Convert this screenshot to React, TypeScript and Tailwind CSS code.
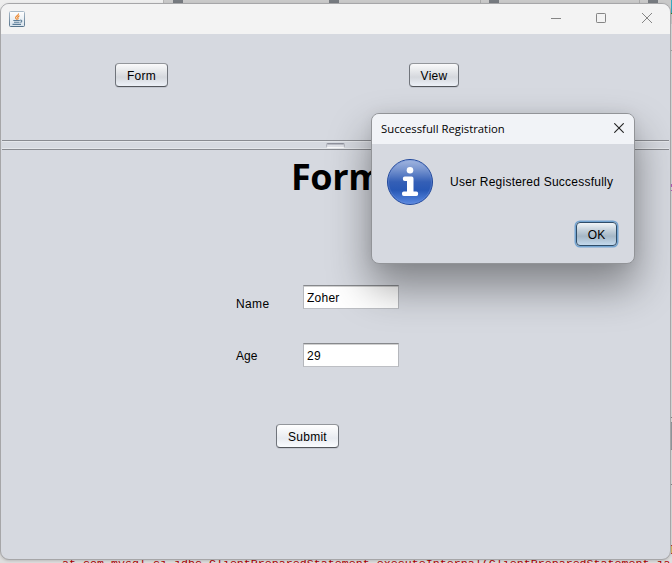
import type { ReactNode } from "react";

const swing = "font-['Liberation_Sans',Arial,sans-serif] text-[12px] leading-[14px] text-black";

function SwingButton({ className, children }: { className: string; children: ReactNode }) {
  return (
    <button
      className={`${swing} flex h-6 items-center justify-center rounded-[4px] border border-x-[#70747b] border-t-[#93969b] border-b-[#53565b] pt-px tracking-[0.25px] shadow-[0_1px_0_#c3c7d0] ${className}`}
    >
      {children}
    </button>
  );
}

function JavaIcon() {
  return (
    <svg width="16" height="16" viewBox="0 0 16 16" fill="none">
      <defs>
        <linearGradient id="javaBg" x2="0" y2="1">
          <stop stopColor="#fff" />
          <stop offset="1" stopColor="#d8e3ec" />
        </linearGradient>
        <linearGradient id="javaEdge" x2="0" y2="1">
          <stop stopColor="#a9bac8" />
          <stop offset="1" stopColor="#56738b" />
        </linearGradient>
      </defs>
      <rect x=".5" y=".5" width="15" height="15" rx="1" fill="url(#javaBg)" stroke="url(#javaEdge)" />
      <path d="M9.5 2.5C10 4.3 6.3 5 6.6 6.8c.1.7.9 1.1 1.1 1.8M10.5 4.8C8.7 5.5 8.4 6.3 9 7.1c.3.5 0 1-.5 1.4" stroke="#ed7d1b" strokeWidth="1.1" />
      <path d="M4.3 9.5h6.5M5 11.3h5.5M3.5 13.4h8.5M11.2 9.2c2.3-.3 2 1.8.2 2.2" stroke="#5b7d98" strokeWidth="1.1" />
    </svg>
  );
}

function InfoIcon() {
  return (
    <svg width="48" height="48" viewBox="0 0 48 48">
      <defs>
        <linearGradient id="infoBg" x2="0" y2="1">
          <stop stopColor="#a3b7e0" />
          <stop offset=".2" stopColor="#7c98d1" />
          <stop offset=".5" stopColor="#345fb6" />
          <stop offset=".68" stopColor="#2858b5" />
          <stop offset="1" stopColor="#5b8ae3" />
        </linearGradient>
      </defs>
      <circle cx="24" cy="24" r="22.5" fill="url(#infoBg)" stroke="#21489b" />
      <circle cx="24" cy="24" r="21.5" fill="none" stroke="#7597dd" strokeOpacity=".4" />
      <circle cx="24" cy="12.2" r="3.3" fill="#fff" />
      <path d="M18.8 18.6h6.9q1.8 0 1.8 1.8V33.6h2.8q1.9 0 1.9 2.2t-1.9 2.2H17.9q-2 0-2-2.2t2-2.2h3.1V23h-2.2q-2 0-2-2.2t2-2.2z" fill="#fff" />
    </svg>
  );
}

function Field({ value }: { value: string }) {
  return (
    <input
      readOnly
      value={value}
      className={`${swing} h-6 w-24 border border-x-[#b5b7bc] border-t-[#86888c] border-b-[#bdbfc4] bg-white pt-[2px] pl-[3px] tracking-[0.25px] shadow-[inset_0_1px_0_#d0d0d0] outline-none`}
    />
  );
}

function DialogWindow() {
  return (
    <section className="absolute top-[113px] left-[371px] flex h-[151px] w-[264px] flex-col overflow-hidden rounded-[8px] border border-[#929498] bg-[#d6d9e0] shadow-[0_22px_40px_2px_rgba(0,0,0,0.38),0_0_14px_rgba(0,0,0,0.06)]">
      <header className="flex h-[30px] shrink-0 items-center justify-between bg-[#f1f3f7] pr-[10px] pl-[9px]">
        <span className="font-['Open_Sans',sans-serif] text-[11.5px] leading-[16px] whitespace-nowrap text-black">
          <span className="inline-block origin-left scale-x-[0.983]">Successfull Registration</span>
        </span>
        <svg className="mb-[2px]" width="10" height="10" viewBox="0 0 10 10" stroke="#222" strokeWidth="1.1">
          <path d="M.3.3l9.4 9.4M9.7.3L.3 9.7" />
        </svg>
      </header>
      <div className="mt-[14px] flex items-center pl-[14px]">
        <InfoIcon />
        <span className={`${swing} ml-4 tracking-[0.23px] whitespace-nowrap`}>User Registered Successfully</span>
      </div>
      <div className="mt-4 flex justify-end pr-[17px]">
        <button
          className={`${swing} flex h-6 w-[41px] items-center justify-center rounded-[4px] border border-[#2f4d69] bg-[linear-gradient(#f1f5f8,#c1ced9_35%,#a5b7c6_60%,#c3d9ed)] pt-px shadow-[0_0_0_1.5px_#73a4d1]`}
        >
          OK
        </button>
      </div>
    </section>
  );
}

function MainWindow() {
  return (
    <main className="absolute top-[3px] left-0 flex h-[557px] w-[671px] flex-col overflow-hidden rounded-[9px] border border-[#a6a6a8] bg-[#d6d9e0] shadow-[0_1px_3px_rgba(0,0,0,0.16)]">
      <header className="flex h-[30px] shrink-0 items-center justify-between bg-[#f3f3f3] pr-[18px] pl-2">
        <JavaIcon />
        <div className="mb-[2px] flex items-center text-[#858585]">
          <svg className="mr-[35px]" width="10" height="10" viewBox="0 0 10 10" stroke="currentColor"><path d="M0 5.5h10" /></svg>
          <svg className="mr-9" width="10" height="10" viewBox="0 0 10 10" fill="none" stroke="currentColor"><rect x=".5" y=".5" width="9" height="9" rx=".7" /></svg>
          <svg width="10" height="10" viewBox="0 0 10 10" stroke="currentColor"><path d="M0 0l10 10M10 0L0 10" /></svg>
        </div>
      </header>
      <div className="flex h-[106px] shrink-0 items-start gap-[241px] pt-[29px] pl-[114px]">
        <SwingButton className="w-[53px] bg-[linear-gradient(#fafafb,#e4e6e9_35%,#d5d8dd_60%,#edf1f8)]">Form</SwingButton>
        <SwingButton className="w-[50px] bg-[linear-gradient(#fafafb,#e4e6e9_35%,#d5d8dd_60%,#edf1f8)]">View</SwingButton>
      </div>
      <div className="mx-px flex h-[10px] shrink-0 justify-center border-y border-[#898b91] shadow-[inset_0_1px_0_#e5e7eb,inset_0_-1px_0_#e5e7eb]">
        <div className="mt-[2px] h-[5px] w-[19px] rounded-[2px] border border-x-[#b4b6be] border-t-[#8f919c] border-b-[#f8f8fa] bg-[#dfe1e7] shadow-[inset_0_1px_0_#b9bbc4]" />
      </div>
      <div className="flex flex-col">
        <h1 className="mt-[3px] ml-[290px] h-12 font-['Open_Sans',sans-serif] text-[36px] leading-[48px] font-bold tracking-[-0.4px] text-black">Form</h1>
        <div className="mt-[84px] flex h-6 pl-[235px]">
          <label className={`${swing} mt-3 w-[67px] tracking-[0.35px]`}>Name</label>
          <Field value="Zoher" />
        </div>
        <div className="mt-[34px] flex h-6 pl-[235px]">
          <label className={`${swing} mt-[6px] w-[67px]`}>Age</label>
          <Field value="29" />
        </div>
        <SwingButton className="mt-[57px] ml-[275px] w-[63px] bg-[linear-gradient(#ffffff,#f0f2f5_40%,#e8ebf0_60%,#fafcff)]">Submit</SwingButton>
      </div>
    </main>
  );
}

export default function App() {
  return (
    <div className="relative flex h-[563px] w-[672px] flex-col overflow-hidden bg-[#dedede]">
      <div className="flex h-[24px] shrink-0 bg-[#c9c9c9]">
        <div className="h-full w-[164px] border-r border-[#b5b5b5] bg-[#eeeeee]" />
        <div className="ml-[9px] h-[4px] w-[10px] bg-[#777b80]" />
        <div className="ml-[146px] h-[4px] w-[10px] bg-[#777b80]" />
        <div className="ml-[141px] h-full border-r border-[#aaa]" />
        <div className="ml-[8px] h-[4px] w-[10px] bg-[#777b80]" />
        <div className="ml-[140px] h-full border-r border-[#aaa]" />
        <div className="ml-[8px] h-[4px] w-[10px] bg-[#777b80]" />
        <div className="ml-auto h-[14px] w-px border-b border-[#30851f] bg-[#38a9bf]" />
      </div>
      <div className="mt-[26px] h-px shrink-0 bg-[#a5a5a5]" />
      <div className="mt-[133px] flex h-[7px] shrink-0 flex-col items-end justify-between">
        <div className="h-[3px] w-[2px] bg-[#b95fbd]" />
        <div className="h-px w-[2px] bg-[#b95fbd]" />
      </div>
      <div className="mt-[226px] h-px shrink-0 bg-[#888]" />
      <div className="mt-1 h-[28px] shrink-0 border-y border-[#909499] bg-[#989da2]" />
      <div className="mt-[16px] h-[8px] w-px shrink-0 border-y border-[#222] bg-[#b07845]" />
      <div className="mt-[10px] h-px shrink-0 bg-[#888]" />
      <div className="mt-[60px] ml-auto h-[9px] w-px shrink-0 border-y border-[#b33] bg-[#d8ba63]" />
      <pre className="mt-[3px] ml-[62px] h-[14px] shrink-0 font-['Liberation_Mono',monospace] text-[11.67px] leading-[14px] text-[#b30000]">at com.mysql.cj.jdbc.ClientPreparedStatement.executeInternal(ClientPreparedStatement.ja</pre>
      <MainWindow />
      <DialogWindow />
    </div>
  );
}
